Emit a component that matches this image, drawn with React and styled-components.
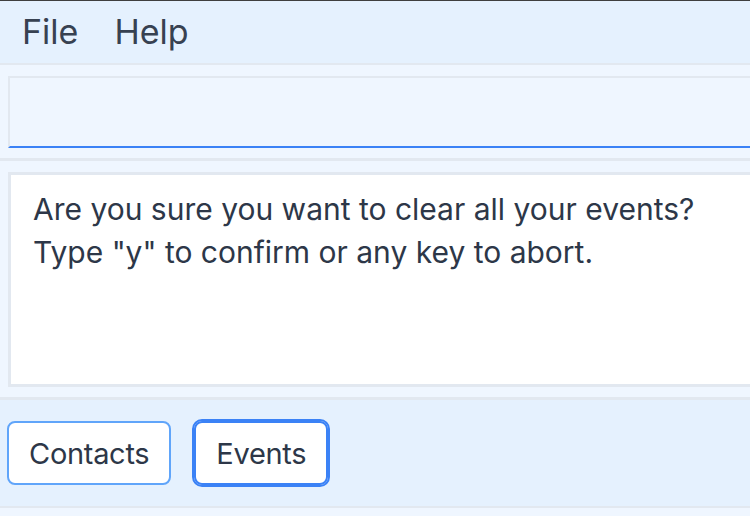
import React from "react";
import styled, { createGlobalStyle } from "styled-components";

const GlobalStyle = createGlobalStyle`
  html, body {
    margin: 0;
    padding: 0;
    background: #eff6ff;
    overflow: hidden;
  }
  body {
    font-family: Inter, "Noto Sans", "Liberation Sans", sans-serif;
    color: #2d3748;
  }
`;

const Window = styled.div`
  width: 750px;
  height: 516px;
  display: flex;
  flex-direction: column;
  border-top: 1px solid #3f3f3f;
  box-sizing: border-box;
  background: #eff6ff;
  overflow: hidden;
`;

const MenuBar = styled.div`
  height: 62px;
  flex: none;
  display: flex;
  align-items: center;
  padding-left: 4px;
  background: #e5f1fe;
  border-bottom: 2px solid #e2e8f0;
`;

const MenuItem = styled.div`
  font-size: 34px;
  padding: 0 18px;
  line-height: 1;
  color: #374151;
`;

const Section = styled.div`
  flex: none;
  padding: ${(p) => p.$pad};
  border-bottom: 3px solid #e2e8f0;
`;

const CommandInput = styled.div`
  height: 68px;
  margin-right: -4px;
  border: 2px solid #e2e8f0;
  border-right: none;
  border-bottom: 2px solid #3b82f6;
  background: #eff6ff;
`;

const ResultBox = styled.div`
  height: 215px;
  border: 3px solid #e2e8f0;
  border-right: none;
  background: #ffffff;
  padding: 13px 0 0 22px;
  box-sizing: border-box;
  font-size: 30px;
  line-height: 43px;
  color: #2d3748;
`;

const ButtonBar = styled.div`
  flex: none;
  height: 108px;
  box-sizing: border-box;
  display: flex;
  align-items: center;
  gap: 23px;
  padding-left: 7px;
  background: #e5f1fe;
  border-bottom: 2px solid #e2e8f0;
`;

const TabButton = styled.button`
  height: 64px;
  box-sizing: border-box;
  padding: 0 20px;
  background: #ffffff;
  border: 2px solid ${(p) => (p.$active ? "#3b82f6" : "#60a5fa")};
  border-radius: 8px;
  outline: ${(p) => (p.$active ? "2px solid #3b82f6" : "none")};
  outline-offset: 0;
  font-family: Inter, "Noto Sans", "Liberation Sans", sans-serif;
  font-size: 29px;
  color: #2d3748;
  cursor: pointer;
  letter-spacing: -0.3px;
`;

export default function App() {
  return (
    <>
      <GlobalStyle />
      <Window>
        <MenuBar>
          <MenuItem>File</MenuItem>
          <MenuItem>Help</MenuItem>
        </MenuBar>
        <Section $pad="11px 0 10px 8px">
          <CommandInput />
        </Section>
        <Section $pad="11px 0 10px 8px">
          <ResultBox>
            Are you sure you want to clear all your events?
            <br />
            Type "y" to confirm or any key to abort.
          </ResultBox>
        </Section>
        <ButtonBar>
          <TabButton>Contacts</TabButton>
          <TabButton $active>Events</TabButton>
        </ButtonBar>
      </Window>
    </>
  );
}
